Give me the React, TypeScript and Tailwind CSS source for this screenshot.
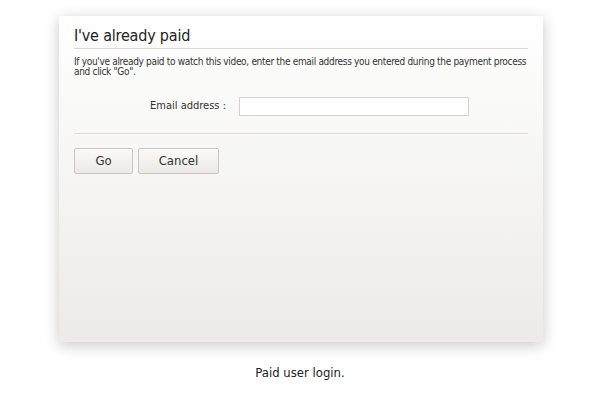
export default function App() {
  const font = { fontFamily: '"DejaVu Sans", Verdana, sans-serif' };
  return (
    <div className="w-[600px] h-[394px] bg-white flex flex-col" style={font}>
      <div className="ml-[59px] mt-[16px] w-[484px] h-[326px] bg-gradient-to-b from-[#ffffff] to-[#ecebe7] shadow-[0_3px_14px_rgba(0,0,0,0.22)] px-[15px] flex flex-col">
        <h1 className="pt-[8px] h-[33px] text-[16px] leading-[24px] text-[#222] border-b border-[#dcd9d4] font-stretch-condensed tracking-[-0.2px]">
          I've already paid
        </h1>
        <p className="mt-[8px] text-[10px] leading-[10px] text-[#333] font-stretch-condensed tracking-[-0.32px]">
          If you've already paid to watch this video, enter the email address you entered during the payment process and click "Go".
        </p>
        <div className="mt-[20px] flex items-center h-[19px]">
          <label className="w-[152px] text-right text-[11px] text-[#333] font-stretch-condensed">
            Email address :
          </label>
          <input className="ml-[13px] w-[230px] h-[19px] bg-white border border-[#d4d2cd] outline-none" />
        </div>
        <div className="mt-[17px] border-b border-[#dcd9d4]" />
        <div className="mt-[14px] flex gap-[5px]">
          <button className="w-[59px] h-[26px] rounded-[2px] border border-[#c9c6c0] bg-gradient-to-b from-[#fbfaf8] to-[#ebe9e5] text-[13px] text-[#333] font-stretch-condensed">
            Go
          </button>
          <button className="w-[81px] h-[26px] rounded-[2px] border border-[#c9c6c0] bg-gradient-to-b from-[#fbfaf8] to-[#ebe9e5] text-[13px] text-[#333] font-stretch-condensed">
            Cancel
          </button>
        </div>
      </div>
      <div className="mt-[21px] text-center text-[13px] text-[#222] font-stretch-condensed">Paid user login.</div>
    </div>
  );
}
